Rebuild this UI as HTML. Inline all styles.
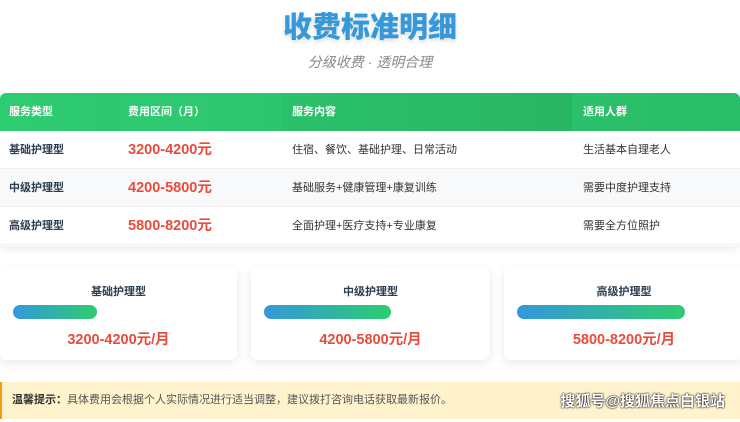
<!DOCTYPE html><html><head><meta charset="utf-8"><style>
*{margin:0;padding:0;box-sizing:border-box}
body{width:740px;height:419px;overflow:hidden;background:#fff;font-family:"Liberation Sans","Noto Sans CJK SC",sans-serif;position:relative}
.t{position:absolute;left:0;width:740px;text-align:center;top:4px;font-size:29px;font-weight:900;color:#3498db;text-shadow:0 2px 4px rgba(0,0,0,.15)}
.s{position:absolute;left:0;width:740px;text-align:center;top:52px;font-size:14px;color:#888;font-style:italic}
.tb{position:absolute;left:0;top:93px;width:740px;height:153px;border-radius:6px;overflow:hidden;box-shadow:0 3px 8px rgba(0,0,0,.08)}
.h{height:38px;background:linear-gradient(90deg,#2ecc71,#27ae60);color:#fff;font-weight:bold;font-size:11px;position:relative}
.r{height:38px;position:relative;font-size:11px;color:#333;border-bottom:1px solid #eee}
.r:nth-child(3){background:#f8f9fa}
.c{position:absolute;top:0;line-height:38px}
.r .c1{font-weight:bold;color:#2c3e50}
.p{color:#e74c3c;font-weight:bold;font-size:14.5px}
.card{position:absolute;top:267px;height:93px;background:#fff;border-radius:7px;box-shadow:0 3px 10px rgba(0,0,0,.09);text-align:center}
.card .n{position:absolute;top:16px;width:100%;font-size:11px;font-weight:bold;color:#2c3e50}
.card .b{position:absolute;left:13px;top:38px;height:14px;border-radius:7px;background:linear-gradient(90deg,#3498db,#2ecc71)}
.card .pr{position:absolute;top:61px;width:100%;font-size:14.5px;font-weight:bold;color:#e74c3c}
.nt{position:absolute;left:0;top:382px;width:740px;height:37px;background:#fff3cd;border-left:2px solid #f39c12;font-size:11px;color:#555;line-height:37px;padding-left:10px}
.wm{position:absolute;right:15px;top:382px;line-height:40px;font-size:15px;color:#fff;font-weight:bold;text-shadow:0 0 2px #000,0 0 1px #000}
</style></head><body>
<div class="t">收费标准明细</div>
<div class="s">分级收费 · 透明合理</div>
<div class="tb">
<div class="h"><span class="c" style="left:9px">服务类型</span><span class="c" style="left:117px;width:165px;background:rgba(46,204,113,.5);padding-left:11px">费用区间（月）</span><span class="c" style="left:292px">服务内容</span><span class="c" style="left:572px;width:168px;background:rgba(46,204,113,.5);padding-left:11px">适用人群</span></div>
<div class="r"><span class="c c1" style="left:9px">基础护理型</span><span class="c p" style="left:128px">3200-4200元</span><span class="c" style="left:292px">住宿、餐饮、基础护理、日常活动</span><span class="c" style="left:583px">生活基本自理老人</span></div>
<div class="r"><span class="c c1" style="left:9px">中级护理型</span><span class="c p" style="left:128px">4200-5800元</span><span class="c" style="left:292px">基础服务+健康管理+康复训练</span><span class="c" style="left:583px">需要中度护理支持</span></div>
<div class="r"><span class="c c1" style="left:9px">高级护理型</span><span class="c p" style="left:128px">5800-8200元</span><span class="c" style="left:292px">全面护理+医疗支持+专业康复</span><span class="c" style="left:583px">需要全方位照护</span></div>
</div>
<div class="card" style="left:0;width:237px"><div class="n">基础护理型</div><div class="b" style="width:84px"></div><div class="pr">3200-4200元/月</div></div>
<div class="card" style="left:251px;width:239px"><div class="n">中级护理型</div><div class="b" style="width:127px"></div><div class="pr">4200-5800元/月</div></div>
<div class="card" style="left:504px;width:240px"><div class="n">高级护理型</div><div class="b" style="width:168px"></div><div class="pr">5800-8200元/月</div></div>
<div class="nt"><b style="color:#333">温馨提示：</b>具体费用会根据个人实际情况进行适当调整，建议拨打咨询电话获取最新报价。</div>
<div class="wm">搜狐号@搜狐焦点白银站</div>
</body></html>
